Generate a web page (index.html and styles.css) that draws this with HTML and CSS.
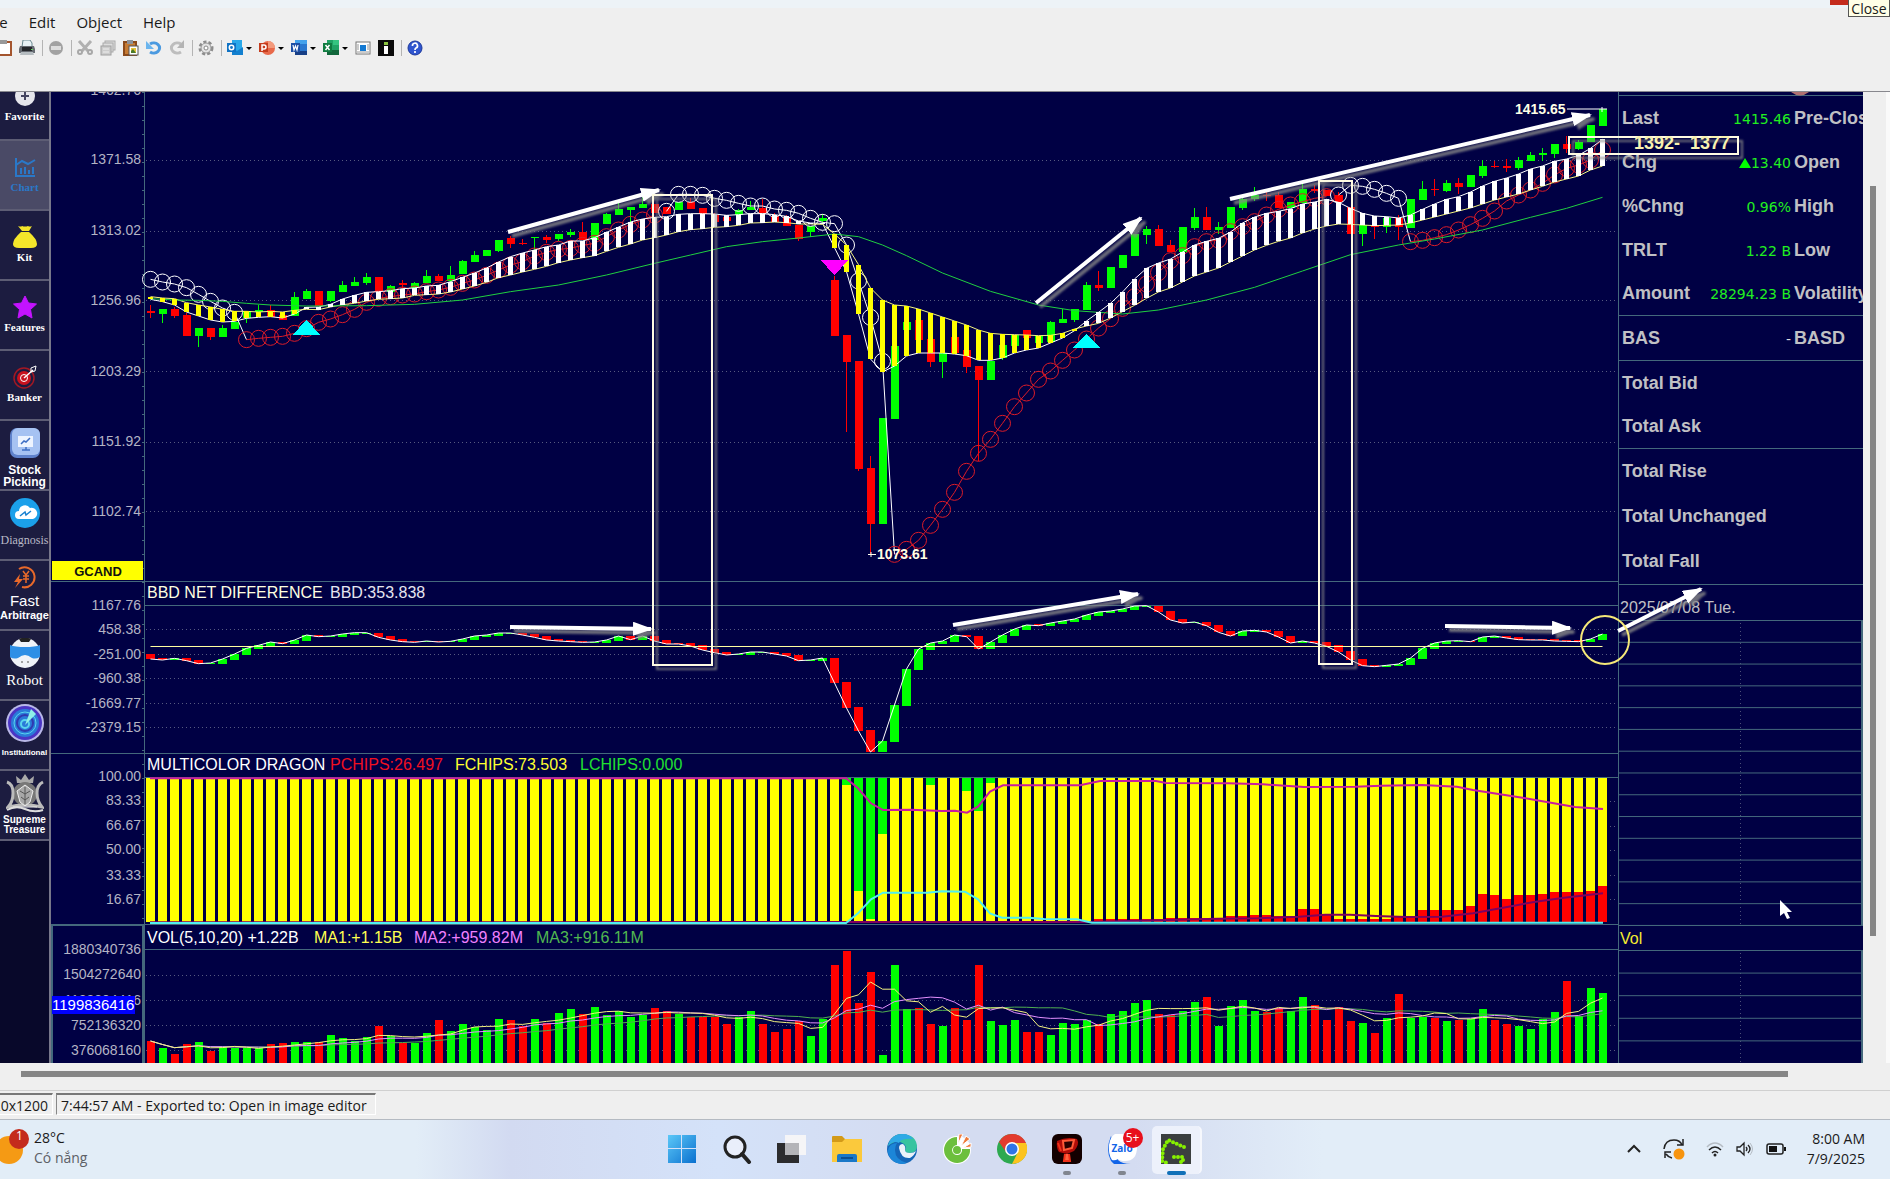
FILE: index.html
```html
<!DOCTYPE html>
<html lang="en">
<head>
<meta charset="utf-8">
<title>Image editor</title>
<link rel="stylesheet" href="styles.css">
</head>
<body>
<header class="titlebar">
<button class="close" aria-label="Close"></button>
<span class="tooltip">Close</span>
</header>
<nav class="menubar">
<button>File</button>
<button>Edit</button>
<button>Object</button>
<button>Help</button>
</nav>
<div class="toolbar">
<button aria-label="Clipboard"><svg viewBox="0 0 16 16"><rect x="1" y="2" width="14" height="13" fill="#fff" stroke="#a4552e" stroke-width="2"/><rect x="4" y="0" width="7" height="4" fill="#999"/></svg></button>
<button aria-label="Print"><svg viewBox="0 0 16 16"><path d="M4 0h7l2 3v4H3z" fill="#e8f2f5" stroke="#6b8890"/><path d="M1 6h14l1 3v4H0V9z" fill="#666b72"/><path d="M3 7h10v4H3z" fill="#25282c"/><path d="M2 12h12l1 3H1z" fill="#b5bcc0"/><path d="M12 9h2v1h-2z" fill="#6fcf6a"/></svg></button>
<i class="sep"></i>
<button aria-label="Delete"><svg viewBox="0 0 16 16"><circle cx="8" cy="8" r="7" fill="#a2a2a2"/><path d="M3 6h10v4H3z" fill="#ddd"/></svg></button>
<i class="sep"></i>
<button aria-label="Cut"><svg viewBox="0 0 16 16"><path d="M2 1l9 10M14 1L5 11" stroke="#b0b0b0" stroke-width="3"/><circle cx="3" cy="12" r="2" fill="none" stroke="#a8a8a8" stroke-width="2"/><circle cx="13" cy="12" r="2" fill="none" stroke="#a8a8a8" stroke-width="2"/></svg></button>
<button aria-label="Copy"><svg viewBox="0 0 16 16"><rect x="5" y="1" width="10" height="9" fill="#ddd" stroke="#aaa"/><rect x="3" y="3" width="10" height="9" fill="#ddd" stroke="#aaa"/><rect x="1" y="6" width="10" height="9" fill="#ccc" stroke="#a0a0a0"/><path d="M3 9h6M3 12h6" stroke="#eee"/></svg></button>
<button aria-label="Paste"><svg viewBox="0 0 16 16"><rect x="1" y="2" width="12" height="13" fill="#c67a32" stroke="#8a4a1c" stroke-width="2"/><rect x="4" y="0" width="6" height="4" fill="#8d9299"/><rect x="6" y="6" width="9" height="9" fill="#fff" stroke="#555"/><path d="M8 8h5v5H8z" fill="#e5c33a"/><path d="M8 11l2-2 3 4H8z" fill="#4a7a2a"/></svg></button>
<button aria-label="Undo"><svg viewBox="0 0 16 16"><path d="M4 4a6 5 0 1 1 0 8" fill="none" stroke="#4b9ae0" stroke-width="3"/><path d="M0 1v8h8z" fill="#6bb5ee"/></svg></button>
<button aria-label="Redo"><svg viewBox="0 0 16 16"><path d="M12 4a6 5 0 1 0 0 8" fill="none" stroke="#bdbdbd" stroke-width="3"/><path d="M15 0v8H8z" fill="#b4b4b4"/></svg></button>
<i class="sep"></i>
<button aria-label="Settings"><svg viewBox="0 0 16 16"><circle cx="8" cy="8" r="6" fill="none" stroke="#8c8c8c" stroke-width="3" stroke-dasharray="3 2"/><circle cx="8" cy="8" r="5" fill="#e4e4e4" stroke="#999"/><circle cx="8" cy="8" r="2" fill="#fff" stroke="#888"/></svg></button>
<i class="sep"></i>
<button class="drop" aria-label="Outlook"><svg viewBox="0 0 16 16"><path d="M5 0h10v15H5z" fill="#28a8ea"/><path d="M5 8l5 3 6-4v8H5z" fill="#1380cf"/><path d="M0 3h9v9H0z" fill="#0f72c4"/><circle cx="4.500" cy="7.500" r="2.200" fill="none" stroke="#fff" stroke-width="1.500"/></svg><i class="caret"></i></button>
<button class="drop" aria-label="PowerPoint"><svg viewBox="0 0 16 16"><circle cx="9" cy="8" r="7" fill="#e8694a"/><path d="M9 1a7 7 0 0 1 7 7H9z" fill="#f39a7c"/><path d="M0 3h9v9H0z" fill="#c53d1e"/><path d="M3 11V5h2a1.500 1.500 0 0 1 0 4H3" fill="none" stroke="#fff" stroke-width="1.500"/></svg><i class="caret"></i></button>
<button class="drop" aria-label="Word"><svg viewBox="0 0 16 16"><path d="M4 0h12v15H4z" fill="#2b78cf"/><path d="M4 0h12v4H4z" fill="#44a2ec"/><path d="M4 11h12v4H4z" fill="#173f86"/><path d="M0 3h9v9H0z" fill="#1d4fa5"/><path d="M2 5l1 5 1.500-4L6 10l1-5" fill="none" stroke="#fff" stroke-width="1.200"/></svg><i class="caret"></i></button>
<button class="drop" aria-label="Excel"><svg viewBox="0 0 16 16"><path d="M4 0h12v15H4z" fill="#21a366"/><path d="M10 0h6v5h-6z" fill="#35c481"/><path d="M4 10h12v5H4z" fill="#12673c"/><path d="M0 3h9v9H0z" fill="#107c41"/><path d="M2.500 5l4 5M6.500 5l-4 5" stroke="#fff" stroke-width="1.500"/></svg><i class="caret"></i></button>
<button aria-label="Window"><svg viewBox="0 0 16 16"><rect x="1" y="2" width="14" height="12" fill="#fff" stroke="#777"/><path d="M5 5h6v6H5z" fill="#1479d2"/><path d="M2 5h2M2 7h2M2 9h2M12 5h2M12 7h2M12 9h2M2 12h12" stroke="#999"/></svg></button>
<button aria-label="Info"><svg viewBox="0 0 16 16"><path d="M0 0h16v16H0z" fill="#0b0b0b"/><path d="M6 2h4v3H6z" fill="#8bc53f"/><path d="M6 6h4v8H6z" fill="#fff"/></svg></button>
<i class="sep"></i>
<button aria-label="Help"><svg viewBox="0 0 16 16"><circle cx="8" cy="8" r="7" fill="#2f55cf" stroke="#1c389a"/><path d="M5.500 6a2.500 2.500 0 1 1 3.500 2q-1 .5-1 2M8 11v2" fill="none" stroke="#fff" stroke-width="1.700"/></svg></button>
</div>
<main class="workspace">
<nav class="side">
<a href="#" class="first"><svg viewBox="0 0 24 24"><circle cx="12" cy="12" r="10" fill="#e6e6ec"/><path d="M12 8v8M8 12h8" stroke="#444460" stroke-width="2"/></svg><span>Favorite</span></a>
<a href="#" class="active"><svg viewBox="0 0 24 24"><path d="M3 3v18h19M3 10l6-4 6 3 7-4" fill="none" stroke="#2a78c8" stroke-width="2"/><path d="M8 19v-6M12 19v-7M16 19v-4M20 19v-7" stroke="#2a78c8" stroke-width="2"/></svg><span>Chart</span></a>
<a href="#"><svg viewBox="0 0 24 24"><path d="M5 1q3 1 4 0 3 1 6 0 2 1 4 0l-3 5H9z" fill="#f4e62a"/><path d="M8 7h8q8 7 8 12 0 4-6 4H6q-6 0-6-4 0-5 8-12z" fill="#f4e62a"/></svg><span>Kit</span></a>
<a href="#"><svg viewBox="0 0 24 24"><path d="M12 1l3.500 7 8 1-6 5.500 1.500 8.500-7-4-7 4 1.500-8.500L.5 9l8-1z" fill="#c313ff" stroke="#c313ff" stroke-linejoin="round"/></svg><span>Features</span></a>
<a href="#"><svg viewBox="0 0 24 24"><circle cx="11" cy="13" r="10" fill="none" stroke="#a31823" stroke-width="1.500"/><circle cx="11" cy="13" r="7" fill="#c8121e"/><circle cx="11" cy="13" r="3.500" fill="none" stroke="#fff"/><path d="M11 13L20 5" stroke="#fff" stroke-width="1.500"/><path d="M18 3l5-2-1 5-4 1z" fill="none" stroke="#fff"/></svg><span>Banker</span></a>
<a href="#" class="big"><svg viewBox="0 0 30 30"><rect width="30" height="30" rx="7" fill="#5f82cc"/><rect x="2" width="28" height="27" rx="6" fill="#a6c2f2"/><rect x="8" y="8" width="15" height="11" fill="#eef4ff"/><path d="M11 16l3-3 2 1 4-4M12 22h8M16 19v3" fill="none" stroke="#3f6fc4" stroke-width="1.500"/></svg><b>Stock<br>Picking</b></a>
<a href="#" class="big"><svg viewBox="0 0 30 30"><circle cx="15" cy="15" r="15" fill="#1ba0ea"/><path d="M9 21a4 4 0 0 1 0-8 6 6 0 0 1 11-3 5 5 0 0 1 3 11z" fill="#fff"/><path d="M10 18l5-4 1 3 5-4" fill="none" stroke="#1880d0" stroke-width="1.500"/></svg><span class="thin">Diagnosis</span></a>
<a href="#" class="fast"><svg viewBox="0 0 24 24"><path d="M6 4a10 10 0 1 1 3 18" fill="none" stroke="#e8692a" stroke-width="2"/><path d="M7 9L1 17h4l-3 6 8-9H6z" fill="#e8692a"/><path d="M10 6l3 4 3-4M13 10v8M10 11h6M10 14h6" fill="none" stroke="#e8692a" stroke-width="1.500"/></svg><span class="word">Fast</span><b class="small">Arbitrage</b></a>
<a href="#" class="big"><svg viewBox="0 0 30 30"><circle cx="15" cy="15" r="15" fill="#f0f3f8"/><path d="M9 1q6-3 12 0l-2 3h-8z" fill="#222"/><path d="M-2 6q5 3 17 3t17-3v11q-5 5-10 3-4-3-7-3t-7 3q-6 2-10-3z" fill="#2e8fe6"/><circle cx="12" cy="24" r="1" fill="#888"/><circle cx="18" cy="24" r="1" fill="#888"/></svg><span class="robot">Robot</span></a>
<a href="#" class="huge"><svg viewBox="0 0 38 38"><circle cx="19" cy="19" r="19" fill="#b9b8e8"/><circle cx="19" cy="19" r="17" fill="#4b35c4"/><circle cx="19" cy="19" r="14" fill="#2a7ad8"/><circle cx="19" cy="19" r="11" fill="none" stroke="#59d4ee"/><circle cx="19" cy="19" r="8" fill="none" stroke="#3038b0" stroke-width="2"/><circle cx="19" cy="20" r="4" fill="none" stroke="#59d4ee" stroke-width="2"/><path d="M19 21L25 5l5 5z" fill="#8ff0e8"/></svg><b class="tiny">Institutional</b></a>
<a href="#" class="huge"><svg viewBox="0 0 38 38"><path d="M11 9l-1-7 5 4 4-6 4 6 5-4-1 7z" fill="#aaa"/><circle cx="19" cy="20" r="12" fill="#777"/><path d="M1 8q6 2 6 11T2 33q8-2 17-2t17 2q-5-6-5-14t6-11" fill="none" stroke="#bbb" stroke-width="3"/><path d="M11 17l8-6 8 6-3 11-5 4-5-4zM7 33h24" fill="#a8a8a8" stroke="#eee"/><path d="M14 17l5 3 5-3M15 23l4 3 4-3M19 13v17" fill="none" stroke="#555"/><path d="M1 36q9-5 18-1t18 1" fill="none" stroke="#ddd" stroke-width="2"/></svg><b class="supreme">Supreme Treasure</b></a>
</nav>
<figure class="chart">
<svg class="plot" viewBox="51 92 1567 971">
<g class="frame">
<path d="M144 92V1063M51 581H1618M144 605H1618M51 753H1618M144 777H1618M51 924H1618M144 949H1618"/>
<path class="dots" d="M146 160H1616M146 231H1616M146 300H1616M146 371H1616M146 442H1616M146 511H1616M146 629H1616M146 654H1616M146 678H1616M146 703H1616M146 727H1616M146 801H1616M146 826H1616M146 850H1616M146 875H1616M146 899H1616M146 975H1616M146 1000H1616M146 1025H1616M146 1050H1616"/>
<path class="ticks" d="M143 92V1063"/>
<path class="volbox" d="M52 1063V925H143V1063"/>
</g>
<g class="axis">
<text x="141" y="95">1462.76</text>
<text x="141" y="164">1371.58</text>
<text x="141" y="235">1313.02</text>
<text x="141" y="305">1256.96</text>
<text x="141" y="376">1203.29</text>
<text x="141" y="446">1151.92</text>
<text x="141" y="516">1102.74</text>
<text x="141" y="610">1167.76</text>
<text x="141" y="634">458.38</text>
<text x="141" y="659">-251.00</text>
<text x="141" y="683">-960.38</text>
<text x="141" y="708">-1669.77</text>
<text x="141" y="732">-2379.15</text>
<text x="141" y="781">100.00</text>
<text x="141" y="805">83.33</text>
<text x="141" y="830">66.67</text>
<text x="141" y="854">50.00</text>
<text x="141" y="880">33.33</text>
<text x="141" y="904">16.67</text>
<text x="141" y="954">1880340736</text>
<text x="141" y="979">1504272640</text>
<text x="141" y="1005">1128204416</text>
<text x="141" y="1030">752136320</text>
<text x="141" y="1055">376068160</text>
</g>
<rect x="52" y="561" width="91" height="19" fill="#ff0"/>
<text class="gcand" x="98" y="576">GCAND</text>
<rect x="52" y="996" width="83" height="18" fill="#00f"/>
<text class="current" x="52" y="1010">1199836416</text>
<g id="price"></g>
<text class="peak" x="1515" y="114">1415.65</text>
<path d="M1567 109H1607M1602 107V112" stroke="#fff"/>
<text class="peak" x="877" y="559">1073.61</text>
<path d="M868 554.500H876M871 552V557" stroke="#ffe"/>
<g class="heads">
<text x="147" y="598"><tspan fill="#ffffe0">BBD NET DIFFERENCE</tspan><tspan x="330" fill="#e6e6f0">BBD:353.838</tspan></text>
<text x="147" y="770"><tspan fill="#fff">MULTICOLOR DRAGON</tspan><tspan x="330" fill="#f01020">PCHIPS:26.497</tspan><tspan x="455" fill="#ffff30">FCHIPS:73.503</tspan><tspan x="580" fill="#20e030">LCHIPS:0.000</tspan></text>
<text x="147" y="943"><tspan fill="#fff">VOL(5,10,20) +1.22B</tspan><tspan x="314" fill="#ffff50">MA1:+1.15B</tspan><tspan x="414" fill="#f080ff">MA2:+959.82M</tspan><tspan x="536" fill="#50b850">MA3:+916.11M</tspan></text>
</g>
<g id="bbd"></g>
<g id="dragon"></g>
<g id="volume"></g>
</svg>
<svg class="marks" viewBox="51 92 1567 971">
<defs>
<marker id="head" viewBox="0 0 20 14" refX="18" refY="7" markerWidth="20" markerHeight="14" markerUnits="userSpaceOnUse" orient="auto"><path d="M0 0L20 7 0 14z" fill="#fff"/></marker>
<filter id="drop" filterUnits="userSpaceOnUse" x="51" y="92" width="1840" height="971"><feDropShadow dx="4" dy="4" stdDeviation="1" flood-color="#888" flood-opacity=".8"/></filter>
</defs>
<g class="arrows" filter="url(#drop)">
<path d="M508 232L659 190"/>
<path d="M1036 303L1141 218"/>
<path d="M1230 199L1590 115"/>
<path d="M510 627L651 629"/>
<path d="M953 625L1138 594"/>
<path d="M1445 626L1570 628"/>
<path d="M1618 631L1701 589"/>
</g>
<g class="boxes" filter="url(#drop)">
<path d="M653 195H712V665H653z"/>
<path d="M1319 181H1352V664H1319z"/>
<path d="M1569 137H1738V154H1569z"/>
</g>
<text class="range" x="1634" y="149">1392-&#160; 1377</text>
<circle cx="1605" cy="640" r="24" fill="none" stroke="#f5e878" stroke-width="2"/>
<path d="M1791 92H1809Q1800 99 1791 92" fill="#b07070"/>
<path d="M1780 900v16l4-3 3 6 3-1-3-6h5z" fill="#fff"/>
</svg>
</figure>
<section class="quote">
<table>
<tbody>
<tr><th>Last</th><td>1415.46</td><th>Pre-Close</th></tr>
<tr><th>Chg</th><td><i class="up"></i>13.40</td><th>Open</th></tr>
<tr><th>%Chng</th><td>0.96%</td><th>High</th></tr>
<tr><th>TRLT</th><td>1.22 B</td><th>Low</th></tr>
<tr><th>Amount</th><td>28294.23 B</td><th>Volatility</th></tr>
</tbody>
<tbody class="tall">
<tr><th>BAS</th><td class="none">-</td><th>BASD</th></tr>
</tbody>
<tbody>
<tr><th colspan="3">Total Bid</th></tr>
<tr><th colspan="3">Total Ask</th></tr>
</tbody>
<tbody class="tall">
<tr><th colspan="3">Total Rise</th></tr>
<tr><th colspan="3">Total Unchanged</th></tr>
<tr><th colspan="3">Total Fall</th></tr>
</tbody>
</table>
<p class="date">2025/07/08 Tue.</p>
<div class="ticks-grid"></div>
<p class="vol">Vol</p>
<div class="ticks-grid rest"></div>
</section>
<div class="vscroll"><i></i></div>
</main>
<div class="hscroll"><i></i></div>
<footer class="status">
<span class="size">1920x1200</span>
<span class="message">7:44:57 AM - Exported to: Open in image editor</span>
</footer>
<div class="taskbar">
<button class="weather">
<svg viewBox="0 0 30 40"><circle cx="9" cy="25" r="14" fill="#f59a14"/><circle cx="19" cy="14" r="10" fill="#c42b1c"/></svg>
<span class="count">1</span>
<span>28°C<br><em>Có nắng</em></span>
</button>
<div class="apps">
<button aria-label="Start"><svg viewBox="0 0 30 30"><defs><linearGradient id="win" x2="1" y2="1"><stop stop-color="#5cc8f8"/><stop offset="1" stop-color="#0a70cf"/></linearGradient></defs><path d="M1 1h13v13H1zM15 1h14v13H15zM1 15h13v14H1zM15 15h14v14H15z" fill="url(#win)"/></svg></button>
<button aria-label="Search"><svg viewBox="0 0 30 30"><circle cx="13" cy="13" r="10" fill="#e9eefa" stroke="#222" stroke-width="3"/><path d="M20 20l7 8" stroke="#222" stroke-width="4" stroke-linecap="round"/></svg></button>
<button aria-label="Task view"><svg viewBox="0 0 30 30"><path d="M0 9h22v20H0z" fill="#2c2c2e"/><path d="M8 1h21v20H8z" fill="#f5f5f7"/><path d="M8 9h14v12H8z" fill="#b4b4b8"/></svg></button>
<button aria-label="Explorer"><svg viewBox="0 0 30 30"><path d="M0 3q0-1 1-1h9l3 3h8v8H0z" fill="#d39a18"/><path d="M0 8h10l3-3h17v23H0z" fill="#fbc93c"/><path d="M5 28v-6q0-2 2-2h16q2 0 2 2v6z" fill="#1a78c8"/><path d="M9 24h12" stroke="#0c4f92" stroke-width="2"/></svg></button>
<button aria-label="Edge"><svg viewBox="0 0 30 30"><circle cx="15" cy="15" r="15" fill="#1566b8"/><path d="M1 12Q4 0 16 0q13 1 14 12 0 7-7 7-5 0-5-3 2-3-1-6Q10 4 1 12z" fill="#37c4a0"/><path d="M1 12Q4 0 16 0q6 0 10 5-12-1-14 4-6-3-11 3z" fill="#2fa9e6"/><path d="M12 14q0-4 4-4 3 2 2 6 0 3 5 3 4 0 6-2-2 5-6 7-9 1-11-10z" fill="#eaf2fa"/><path d="M8 16q0 10 12 13-9 3-16-4-6-8-1-13 1-2 7-3-2 3-2 7z" fill="#1c86d8"/></svg></button>
<button aria-label="Coc Coc"><svg viewBox="0 0 30 30"><circle cx="15" cy="16" r="14" fill="#fff"/><path d="M15 3A13 13 0 1 0 28 15H20A5 5 0 1 1 15 11z" fill="#6cbf3d"/><circle cx="15" cy="16" r="4" fill="#6cbf3d"/><path d="M16 10l1-10 4 0zM19 12l5-10 4 3zM21 14l8-5v4z" fill="#ef7a3a" stroke="#fff"/></svg></button>
<button aria-label="Chrome"><svg viewBox="0 0 30 30"><circle cx="15" cy="15" r="15" fill="#2da94f"/><path d="M2 8A15 15 0 0 1 29 9H15l-6 9z" fill="#e33b2e"/><path d="M15 30L21 18 19 9H29A15 15 0 0 1 15 30z" fill="#fcc31e"/><circle cx="15" cy="15" r="7" fill="#fff"/><circle cx="15" cy="15" r="5.500" fill="#2f74e6"/></svg></button>
<button class="running" aria-label="Trading"><svg viewBox="0 0 30 30"><rect width="30" height="30" rx="6" fill="#130000"/><path d="M5 7q10-5 20-2 3 5-3 12l-7 3-8-2q-3-4-2-11z" fill="#b00c08"/><path d="M11 7l11-1-2 8-8 2z" fill="#2a0000" stroke="#ff5a38" stroke-width="2"/><path d="M6 9l3 8M13 20l-1 7h6l-1-7" fill="#ff6040" stroke="#f03018" stroke-width="2"/></svg></button>
<button class="running" aria-label="Zalo"><svg viewBox="0 0 30 30"><path d="M4 2q-6 14 0 25l3 3h17q-9 0-13-4z" fill="#1164e8"/><path d="M8 0h16q6 3 6 13 0 14-12 14-5 0-7-2-3 2-6 1Q1 20 2 11 3 3 8 0z" fill="#fff"/></svg><span class="zalo">Zalo</span><span class="badge">5+</span></button>
<button class="running open" aria-label="Greenshot"><svg viewBox="0 0 30 30"><path d="M0 0h30v30H0z" fill="#3b3f3f"/><path d="M23 13L7 6 2 15 1 27 6 29M13 23h9v5h-5" fill="none" stroke="#86f000" stroke-width="4" stroke-linecap="round" stroke-dasharray="0 4"/></svg></button>
</div>
<div class="tray">
<svg viewBox="0 0 16 16"><path d="M2 11l6-6 6 6" fill="none" stroke="#222" stroke-width="2"/></svg>
<svg class="sync" viewBox="0 0 22 22"><path d="M1 11Q2 2 11 2q6 0 8 5M20 1v6h-6M2 20v-6h6M3 16q2 3 6 4" fill="none" stroke="#222" stroke-width="1.500"/><circle cx="16" cy="16" r="5.500" fill="#f7940f"/></svg>
<svg class="wifi" viewBox="0 0 18 16"><path d="M1 6q8-8 16 0" fill="none" stroke="#b5bcc4" stroke-width="1.500"/><path d="M3 9q6-6 12 0M6 12q3-3 6 0" fill="none" stroke="#222" stroke-width="1.500"/><circle cx="9" cy="14" r="1.500" fill="#222"/></svg>
<svg class="wifi" viewBox="0 0 18 16"><path d="M1 6v4h3l4 4V2L4 6zM10 6q2 2 0 4M12 4q4 4 0 8" fill="none" stroke="#222" stroke-width="1.300"/><path d="M14 2q5 6 0 12" fill="none" stroke="#b5bcc4"/></svg>
<svg class="battery" viewBox="0 0 20 16"><rect x="1" y="3" width="16" height="10" rx="2" fill="none" stroke="#222" stroke-width="1.500"/><path d="M3 5h8v6H3zM18 6h2v4h-2z" fill="#111"/></svg>
<span class="clock">8:00 AM<br>7/9/2025</span>
</div>
</div>
<script src="chart.js"></script>
</body>
</html>
```
FILE: styles.css
```css
* {
  box-sizing: border-box;
}
body {
  margin: 0;
  min-height: 100vh;
  display: flex;
  flex-direction: column;
  overflow: hidden;
  background-color: #efefef;
  color: #1a1a1a;
  font-family: "Open Sans", "Noto Sans", sans-serif;
  font-size: 14px;
}
button {
  margin: 0;
  padding: 0;
  border: 0;
  background: none;
  color: inherit;
  font: inherit;
}
p, figure {
  margin: 0;
}

/* window top */
.titlebar {
  display: flex;
  justify-content: flex-end;
  height: 8px;
  background-color: #edf3f7;
}
.close {
  width: 60px;
  height: 5px;
  background-color: #c42b1c;
}
.tooltip {
  position: absolute;
  top: 0;
  right: 0;
  z-index: 3;
  width: 42px;
  height: 17px;
  border: 1px solid #555;
  border-top: 0;
  background-color: #ffffe6;
  line-height: 17px;
  text-align: center;
}
.menubar {
  display: flex;
  gap: 21px;
  height: 30px;
  margin-left: -16px;
  font-size: 15px;
  line-height: 28px;
}
.menubar button {
  align-self: flex-start;
}
.toolbar {
  display: flex;
  align-items: flex-start;
  gap: 7px;
  height: 54px;
  margin-left: -4px;
  padding-top: 2px;
  border-bottom: 1px solid #88888e;
}
.toolbar button, .toolbar svg {
  display: block;
  width: 16px;
  height: 16px;
}
.toolbar .drop {
  display: flex;
  align-items: center;
  gap: 3px;
  width: 25px;
}
.caret {
  border: 3px solid transparent;
  border-top-color: #000;
  border-bottom: 0;
}
.sep {
  width: 1px;
  height: 16px;
  margin-right: -2px;
  background-color: #b4b4b4;
}

/* captured picture */
.workspace {
  display: flex;
}
.side {
  width: 51px;
  flex: none;
  overflow: hidden;
  border-right: 2px solid #77778a;
  background-color: #08082a;
}
.side a {
  display: flex;
  flex-direction: column;
  align-items: center;
  height: 70px;
  padding-top: 14px;
  border-bottom: 2px solid #5d5d74;
  background-color: #1c1c40;
  color: #fff;
  font: bold 11px/12px "Liberation Serif", serif;
  text-align: center;
  text-decoration: none;
}
.side svg {
  flex: none;
  width: 24px;
  height: 24px;
  margin-bottom: 2px;
}
.side .first {
  height: 49px;
  justify-content: flex-end;
  padding: 0 0 17px;
}
.side .active {
  background-color: #4a4a66;
  color: #2a78c8;
}
.side .big {
  padding-top: 7px;
}
.side .big svg {
  width: 30px;
  height: 30px;
  margin-bottom: 6px;
}
.side .huge {
  padding-top: 2px;
}
.side .huge svg {
  width: 38px;
  height: 40px;
}
.side .fast {
  padding-top: 4px;
}
.side b {
  font: bold 12px/12px "Liberation Sans", sans-serif;
}
.side .thin {
  color: #b9b9c6;
  font-size: 12px;
  font-weight: normal;
}
.side .word {
  margin-top: 2px;
  font: 15px/16px "Liberation Sans", sans-serif;
}
.side .small {
  font-size: 11px;
}
.side .robot {
  font-size: 15px;
  font-weight: normal;
}
.side .tiny {
  font-size: 8px;
  line-height: 16px;
}
.side .supreme {
  font-size: 10px;
  line-height: 10px;
}
.chart {
  position: relative;
  z-index: 1;
  flex: 1;
  min-width: 0;
}
.plot {
  display: block;
  width: 100%;
  background-color: #000044;
}
.marks {
  position: absolute;
  top: 0;
  left: 0;
  width: 100%;
  overflow: visible;
  pointer-events: none;
}
.chart text {
  font-family: "Liberation Sans", Arial, sans-serif;
  font-size: 14px;
}
.frame path {
  fill: none;
  stroke: #44687c;
  shape-rendering: crispEdges;
}
.frame .dots {
  stroke: #565a80;
  stroke-dasharray: 1 3;
}
.frame .ticks {
  stroke-dasharray: 1 13;
  stroke-width: 2;
}
.frame .volbox {
  stroke-width: 2;
}
.axis text {
  fill: #b4b4c4;
  text-anchor: end;
}
.chart .gcand {
  fill: #111;
  font-size: 13px;
  font-weight: bold;
  text-anchor: middle;
}
.chart .current {
  fill: #fff;
  font-size: 15px;
}
.chart .peak {
  fill: #ffffe6;
  font-weight: bold;
}
.chart .heads text {
  font-size: 16px;
}
.chart .range {
  fill: #f8f2b0;
  font-size: 18px;
  font-weight: bold;
}
.arrows path {
  fill: none;
  stroke: #fff;
  stroke-width: 4;
  marker-end: url(#head);
}
.boxes path {
  fill: none;
  stroke: #fffbe2;
  stroke-width: 2;
}
.crisp {
  shape-rendering: crispEdges;
}

/* quote panel */
.quote {
  display: flex;
  flex-direction: column;
  width: 245px;
  flex: none;
  overflow: hidden;
  padding-top: 3px;
  border-left: 1px solid #44687c;
  background-color: #000044;
  color: #c0c0c4;
  font-family: "Liberation Sans", Arial, sans-serif;
}
.quote table {
  width: 100%;
  border-collapse: collapse;
  table-layout: fixed;
}
.quote tbody {
  border-top: 1px solid #44687c;
}
.quote th, .quote td {
  height: 44px;
  padding: 1px 0 0 3px;
  overflow: visible;
  font-size: 18px;
  font-weight: bold;
  text-align: left;
  white-space: nowrap;
}
.quote .tall th {
  height: 45px;
}
.quote td {
  width: 100px;
  padding: 2px 0 0;
  color: #20f020;
  font: 14px "DejaVu Sans", sans-serif;
  text-align: right;
}
.quote .none {
  color: #ddd;
}
.up {
  display: inline-block;
  border: 6px solid transparent;
  border-bottom: 10px solid #00ff00;
  border-top: 0;
}
.date, .vol {
  flex: none;
  height: 36px;
  padding-left: 1px;
  border-top: 1px solid #44687c;
  font-size: 16px;
  line-height: 46px;
}
.vol {
  height: 25px;
  color: #f4ec30;
  line-height: 26px;
}
.ticks-grid {
  flex: none;
  height: 305px;
  border-right: 2px solid #44687c;
  background-image: linear-gradient(#44687c 1px, transparent 1px), linear-gradient(#000044 3px, #4c5078 3px);
  background-position: 0 0, 50% 0;
  background-repeat: round, repeat-y;
  background-size: 100% 22px, 1px 4px;
}
.rest {
  flex: 1;
  background-size: 100% 23px, 1px 4px;
}
.vscroll {
  display: flex;
  justify-content: center;
  width: 27px;
  flex: none;
  padding: 94px 4px 127px 0;
  border-right: 4px solid #fafafa;
}
.vscroll i {
  width: 6px;
  background-color: #868686;
}
.hscroll {
  height: 28px;
  padding: 8px 102px 0 21px;
  border-bottom: 1px solid #d0d0d0;
}
.hscroll i {
  display: block;
  height: 6px;
  background-color: #868686;
}

/* status bar */
.status {
  display: flex;
  gap: 3px;
  height: 29px;
  padding-top: 2px;
  border-bottom: 1px solid #b4bac2;
}
.status span {
  height: 22px;
  padding: 0 8px 0 4px;
  border: 1px solid #fff;
  border-top: 2px solid #777;
  border-left: 1px solid #888;
  line-height: 21px;
}
.status .size {
  display: flex;
  justify-content: flex-end;
  width: 53px;
  overflow: hidden;
  padding-right: 4px;
  border-left: 0;
}

/* taskbar */
.taskbar {
  flex: 1;
  display: grid;
  grid-template-columns: 1fr auto 1fr;
  min-height: 59px;
  padding-right: 25px;
  background-image: linear-gradient(90deg, #e2edf7 22%, #d2daf1 27%, #d4e2f9 38%, #d4dcf1 48%, #d4dcf1 60%, #e2edf8 70%);
}
.weather {
  position: relative;
  justify-self: start;
  display: flex;
  align-items: center;
  gap: 4px;
  padding-bottom: 3px;
  line-height: 20px;
  text-align: left;
}
.weather svg {
  width: 30px;
  height: 40px;
  margin-bottom: 6px;
}
.weather em {
  color: #5c6066;
  font-style: normal;
}
.count {
  position: absolute;
  top: 8px;
  left: 16px;
  color: #fff;
  font-size: 12px;
  line-height: 16px;
}
.apps {
  display: flex;
  align-items: center;
  gap: 5px;
  margin-right: 7px;
}
.apps button {
  position: relative;
  width: 50px;
  height: 48px;
  padding-bottom: 1px;
  border-radius: 5px;
}
.apps svg {
  display: block;
  width: 30px;
  height: 30px;
  margin: 0 auto;
}
.running::after {
  content: "";
  position: absolute;
  bottom: -1px;
  left: 21px;
  width: 8px;
  height: 4px;
  border-radius: 2px;
  background-color: #80858f;
}
.apps .open {
  background-color: #edf1fb;
  border-right: 2px solid #f6f8fd;
}
.open::after {
  left: 15px;
  width: 19px;
  background-color: #1070b8;
}
.zalo {
  position: absolute;
  top: 15px;
  left: 15px;
  color: #1164e8;
  font-size: 10px;
  font-weight: bold;
}
.badge {
  position: absolute;
  top: 2px;
  left: 26px;
  width: 20px;
  height: 20px;
  border-radius: 10px;
  background-color: #e8101c;
  color: #fff;
  font-size: 12px;
  line-height: 20px;
}
.tray {
  justify-self: end;
  display: flex;
  align-items: center;
  padding-bottom: 2px;
}
.tray svg {
  width: 16px;
  height: 16px;
  margin-right: 21px;
}
.tray .sync {
  width: 22px;
  height: 22px;
}
.tray .wifi {
  width: 18px;
  margin-right: 12px;
}
.tray .battery {
  width: 20px;
}
.clock {
  line-height: 20px;
  text-align: right;
}
```
FILE: chart.js
```js
const NS = 'http://www.w3.org/2000/svg';
const GREEN = '#00ff00';
const RED = '#ff0000';

// every pane shares the same columns, 12 units apart
const cx = i => 150.5 + 12 * i;

function add(parent, name, attrs) {
  const el = document.createElementNS(NS, name);
  for (const key in attrs) el.setAttribute(key, attrs[key]);
  parent.appendChild(el);
  return el;
}

function layer(id, crisp) {
  return add(document.getElementById(id), 'g', crisp ? { class: 'crisp' } : {});
}

function bar(parent, i, top, bottom, width, fill) {
  add(parent, 'rect', { x: cx(i) - width / 2, y: top, width, height: Math.max(bottom - top, 1), fill });
}

function line(parent, points, stroke, width = 1) {
  add(parent, 'polyline', { points: points.join(' '), fill: 'none', stroke, 'stroke-width': width });
}

const rows = text => text.trim().split(/\s*,\s*/).map(r => r.split(' '));

// values are stored with three steps to the unit
const py = v => 90 + v / 3;
const by = v => 570 + v / 3;

// colour, body top, body bottom, high, low
const candles = rows(`
r 662 669 645 684, g 657 671 657 699, r 657 678 650 684, r 675 738 670 738, g 714 738 714 770,
r 714 740 714 749, g 714 740 706 740, g 696 716 694 716, g 664 685 664 699, g 661 667 645 667,
r 661 680 645 680, r 675 689 670 689, g 622 677 605 677, g 603 626 597 626, r 603 647 603 647,
g 603 632 603 635, g 585 605 573 605, g 575 587 561 587, g 561 578 549 585, r 561 605 561 605,
g 588 605 585 605, r 580 585 570 605, g 579 594 576 596, g 558 580 541 580, r 558 573 551 573,
g 555 574 529 576, g 514 553 510 553, g 495 515 483 516, g 480 497 480 499, g 450 482 450 487,
r 443 461 437 475, r 458 462 448 466, g 440 444 440 480, r 440 451 434 460, g 432 447 432 452,
g 427 434 417 440, r 426 451 396 451, g 400 450 400 450, g 373 402 370 402, g 357 375 340 375,
g 350 359 350 395, g 342 353 320 353, r 342 370 342 370, r 350 372 350 372, g 336 359 336 359,
r 336 357 325 357, r 353 371 353 371, r 376 395 370 395, r 380 393 375 393, g 360 375 358 375,
g 350 360 333 360, r 353 369 327 369, r 378 396 370 396, r 380 407 376 407, r 404 446 404 452,
g 408 426 408 440, g 385 392 372 398, r 570 738 557 738, r 735 816 735 1026, r 813 1137 813 1142,
r 1134 1302 1098 1392, g 984 1302 984 1302, g 768 987 768 987, g 695 720 695 720, r 690 750 690 750,
r 748 816 748 830, g 790 816 790 864, r 740 790 740 790, r 780 831 780 848, r 828 870 828 1112,
g 812 870 812 870, g 766 805 766 810, g 736 768 736 768, r 720 745 720 745, g 738 760 738 760,
g 697 755 692 757, g 687 698 657 698, g 657 689 657 695, g 586 660 576 660, r 585 594 543 603,
g 531 594 531 594, g 496 534 496 534, g 433 497 433 497, g 417 434 408 462, r 417 467 406 467,
r 465 487 449 487, g 411 485 411 485, g 381 413 354 420, r 381 419 351 419, g 412 419 395 432,
g 351 415 351 415, g 328 353 324 360, g 316 327 292 333, r 316 319 303 333, r 315 355 307 355,
g 335 354 335 354, g 296 338 280 338, r 297 304 285 310, r 300 319 300 319, r 316 337 306 337,
r 352 432 352 432, g 405 431 370 468, r 405 412 380 447, g 385 412 377 430, r 385 412 375 450,
g 327 413 327 413, g 297 330 273 330, r 297 301 268 318, g 278 303 270 306, r 279 291 265 312,
g 256 290 256 290, g 228 257 210 264, r 228 231 212 234, r 228 234 208 246, g 210 234 201 241,
g 195 212 187 212, g 188 195 173 214, g 163 191 163 203, r 163 177 139 190, g 156 176 151 180,
g 105 157 105 157, g 58 107 58 107`);

// trend band, top and bottom
const band = rows(`
620 628, 624 635, 626 645, 638 666, 645 678, 651 690, 658 696, 664 694, 664 685, 666 682,
664 680, 666 684, 661 672, 652 658, 651 659, 643 651, 627 644, 616 640, 607 633, 605 628,
602 626, 596 624, 594 616, 588 614, 586 612, 575 606, 562 597, 549 588, 534 577, 516 563,
500 555, 489 546, 480 538, 470 529, 465 518, 453 510, 453 503, 443 497, 427 484, 411 472,
396 462, 387 450, 382 443, 380 435, 373 425, 371 419, 371 416, 372 412, 376 410, 374 406,
371 399, 371 398, 374 396, 379 398, 393 402, 399 402, 400 403, 432 473, 465 545, 524 672,
594 807, 630 846, 645 828, 648 798, 657 789, 669 789, 681 789, 693 792, 705 797, 720 811,
730 811, 733 804, 734 789, 735 780, 737 774, 736 759, 730 744, 717 722, 693 708, 667 700,
640 684, 606 665, 567 646, 535 625, 519 606, 507 594, 486 576, 465 558, 454 546, 445 534,
426 516, 399 498, 381 480, 370 466, 364 454, 356 444, 342 429, 336 417, 328 408, 337 402,
355 403, 370 405, 378 407, 380 406, 384 405, 375 399, 358 390, 342 381, 328 372, 320 363,
306 354, 288 342, 274 330, 264 321, 252 312, 237 300, 228 289, 214 276, 207 267, 196 258,
175 240, 148 228`).map(r => r.map(Number));
const isYellow = i => i < 13 || (i > 56 && i < 78);

const rings = [568, 576, 582, 593, 613, 634, 654, 667, 749, 745, 742, 739, 730, 716, 697, 687, 674, 658, 637, 625,
  620, 615, 612, 605, 600, 592, 580, 570, 556, 540, 525, 515, 498, 487, 478, 475, 466, 460, 440, 420,
  403, 390, 375, 364, 313, 313, 316, 325, 331, 340, 348, 348, 357, 361, 370, 385, 397, 401, 465, 573,
  682, 814, 1393, 1378, 1351, 1306, 1258, 1207, 1144, 1090, 1048, 1000, 950, 909, 868, 843, 811, 780, 747, 714,
  686, 655, 620, 582, 548, 512, 497, 470, 455, 450, 425, 410, 395, 375, 358, 345, 335, 325, 320, 315,
  286, 289, 298, 310, 325, 455, 451, 443, 434, 420, 404, 385, 363, 333, 315, 300, 280, 255, 235, 225, 210, 180];
const isWhiteRing = i => i < 8 || (i > 42 && i < 62) || (i > 98 && i < 105);

const average = rows(`0 626, 2 630, 4 631, 6 634, 8 640, 10 645, 13 648, 18 647, 22 643, 26 630, 30 605, 34 585,
38 555, 42 520, 45 495, 48 470, 51 455, 54 444, 57 432, 59 440, 61 465, 63 497, 66 549, 70 604, 74 645,
77 662, 81 672, 84 660, 88 630, 92 592, 96 543, 100 494, 104 465, 107 447, 111 420, 115 382, 118 355, 121 322`);

function drawPrice() {
  const bars = layer('price', true);
  candles.forEach(([c, top, bottom, high, low], i) => {
    const fill = c === 'g' ? GREEN : RED;
    bar(bars, i, py(high), py(low), 1, fill);
    bar(bars, i, py(top), py(bottom), 8, fill);
  });
  const curves = layer('price');
  let run = [];
  rings.forEach((v, i) => {
    const white = isWhiteRing(i);
    const stroke = white ? '#ffffff' : '#dc1c28';
    run.push([cx(i), py(v)]);
    add(curves, 'circle', { cx: cx(i), cy: py(v), r: 8, fill: 'none', stroke });
    if (i === rings.length - 1 || isWhiteRing(i + 1) !== white) {
      if (white) run.push([cx(i + 1), py(rings[i + 1])]);
      line(curves, run, stroke);
      run = [];
    }
  });
  const columns = layer('price', true);
  band.forEach(([top, bottom], i) => bar(columns, i, py(top), py(bottom), 5, isYellow(i) ? '#ffff00' : '#ffffff'));
  line(curves, band.map((b, i) => [cx(i), py(isYellow(i) ? b[1] : b[0])]), '#ffffff');
  line(curves, band.map((b, i) => [cx(i), py(isYellow(i) ? b[0] : b[1])]), '#f4f480');
  line(curves, average.map(([i, v]) => [cx(i), py(v)]), '#20d040');
  [[13, 690, 735, '#00ffff'], [57, 555, 510, '#ff00ff'], [78, 733, 773, '#00ffff']].forEach(([i, tip, base, fill]) => {
    add(columns, 'polygon', { points: `${cx(i)},${py(tip)} ${cx(i) - 14},${py(base)} ${cx(i) + 14},${py(base)}`, fill });
  });
}

const net = rows(`
r 252 267, r 265 270, g 265 269, r 265 272, r 270 281, g 279 281, g 267 281, g 252 270, g 235 255, g 226 236,
g 216 228, r 216 221, g 210 221, g 195 213, r 195 200, g 198 200, g 192 201, g 188 195, g 188 190, r 189 202,
r 198 210, r 207 215, r 213 217, g 213 217, r 213 216, g 214 216, g 207 216, g 198 210, g 195 200, g 189 197,
g 189 191, r 189 195, r 193 202, r 198 210, r 207 213, r 210 215, r 213 217, g 216 218, g 210 218, g 198 212,
r 198 209, g 198 209, r 198 213, r 210 222, r 219 222, r 219 228, r 226 240, r 237 248, r 246 255, g 252 255,
g 246 255, g 246 248, r 246 252, r 249 258, r 255 272, g 270 273, g 264 273, r 264 339, r 336 414, r 411 483,
r 480 546, g 513 546, g 405 516, g 297 408, g 237 300, g 219 240, g 213 221, g 195 216, r 195 200, r 198 237,
g 216 237, g 195 219, g 177 198, g 165 180, r 163 167, g 159 167, g 153 162, g 147 156, g 135 150, g 126 138,
g 123 129, g 117 126, g 108 120, g 107 109, r 108 126, r 123 150, r 147 159, g 156 158, r 156 167, r 165 187,
r 183 198, g 183 198, g 181 185, r 180 186, r 183 201, r 198 219, g 213 218, r 213 219, r 216 229, r 226 246,
r 243 270, r 267 287, r 285 290, g 286 291, g 282 288, g 264 285, g 235 267, g 219 237, g 213 222, g 212 215,
r 212 215, g 201 216, g 198 204, r 198 204, r 201 209, r 207 210, r 206 210, r 207 213, r 210 214, r 210 215,
g 207 216, g 192 210`);

function drawNet() {
  const bars = layer('bbd', true);
  net.forEach(([c, top, bottom], i) => bar(bars, i, by(top), by(bottom), 9, c === 'g' ? GREEN : RED));
  const curves = layer('bbd');
  line(curves, net.map(([c, top, bottom], i) => [cx(i), by(c === 'g' ? top : bottom)]), '#ffffff');
  line(curves, [[cx(0), 646.5], [cx(121), 646.5]], '#ffffa0');
}

const locked = { 58: 645, 59: 963, 60: 1048, 61: 792, 65: 645, 68: 663, 69: 723, 70: 639 };
// starts at column 79
const profit = [1048, 1048, 1048, 1048, 1048, 1048, 1045, 1045, 1045, 1045, 1043, 1038, 1038, 1035, 1035, 1038,
  1038, 1017, 1017, 1034, 1046, 1046, 1046, 1046, 1046, 1040, 1038, 1020, 1020, 1020, 1020, 1008, 972, 975, 987,
  975, 975, 972, 966, 966, 966, 963, 948];

function drawDragon() {
  const bars = layer('dragon', true);
  for (let i = 0; i < 122; i++) {
    bar(bars, i, 778, 922, 9, '#ffff00');
    if (locked[i]) bar(bars, i, 778, by(locked[i]), 9, GREEN);
    if (i > 78) bar(bars, i, by(profit[i - 79]), 922, 9, RED);
  }
  const curves = layer('dragon');
  const curve = (text, stroke) => line(curves, rows(text).map(([x, y]) => [x, by(y)]), stroke, 2);
  curve(`150 1057, 1090 1056, 1166 1050, 1218 1046, 1258 1045, 1299 1040, 1325 1034, 1350 1034, 1376 1038, 1406 1041,
1442 1040, 1473 1030, 1503 1013, 1534 996, 1564 983, 1603 970`, '#800060');
  curve(`150 625, 846 625, 858 655, 871 700, 883 720, 911 719, 942 723, 955 722, 967 728, 978 710, 990 665, 1003 646,
1080 646, 1100 633, 1156 633, 1166 639, 1228 640, 1263 643, 1304 651, 1355 650, 1381 647, 1422 645, 1457 650,
1473 660, 1524 684, 1575 711, 1603 717`, '#c81ca0');
  curve(`150 1059, 846 1059, 858 1030, 871 988, 883 968, 927 968, 942 964, 965 965, 978 988, 990 1030, 1002 1043,
1029 1043, 1044 1047, 1077 1048, 1092 1058, 1603 1058`, '#50f0f0');
}

const volumes = [22, 15, 9, 19, 21, 12, 16, 15, 15, 15, 19, 20, 21, 21, 21, 28, 25, 22, 26, 37,
  27, 20, 20, 30, 43, 32, 39, 36, 33, 44, 43, 37, 44, 40, 50, 54, 49, 56, 48, 52,
  46, 48, 55, 52, 49, 46, 46, 46, 39, 46, 52, 39, 31, 34, 42, 27, 44, 98, 112, 60,
  91, 8, 98, 54, 55, 39, 37, 55, 43, 98, 42, 38, 43, 31, 31, 28, 40, 39, 43, 39,
  49, 52, 60, 63, 49, 48, 52, 61, 66, 37, 57, 63, 52, 51, 55, 52, 66, 58, 43, 56,
  42, 40, 30, 45, 69, 45, 46, 45, 42, 43, 44, 54, 43, 39, 37, 34, 44, 51, 82, 47, 75, 70];
const volumeSides = 'rgrrgrgggg' + 'rrggrggggr' + 'grggrggggg' + 'rrgrggrggg' + 'ggrrgrrrrg' + 'grrrrggrrr'
  + 'rgggrrgrrr' + 'gggrrggggr' + 'ggggrrggrg' + 'gggrrggrrr' + 'rgrgrggrgr' + 'ggrrggggrg' + 'gg';

function drawVolume() {
  const bars = layer('volume', true);
  volumes.forEach((v, i) => bar(bars, i, 1063 - v, 1063, 8, volumeSides[i] === 'g' ? GREEN : RED));
  const curves = layer('volume');
  [[20, '#50b050'], [10, '#e490ff'], [5, '#f4f480']].forEach(([n, stroke]) => {
    line(curves, volumes.map((v, i) => {
      const part = volumes.slice(Math.max(0, i - n + 1), i + 1);
      return [cx(i), 1063 - part.reduce((a, b) => a + b) / part.length];
    }), stroke);
  });
}

drawPrice();
drawNet();
drawDragon();
drawVolume();
```
